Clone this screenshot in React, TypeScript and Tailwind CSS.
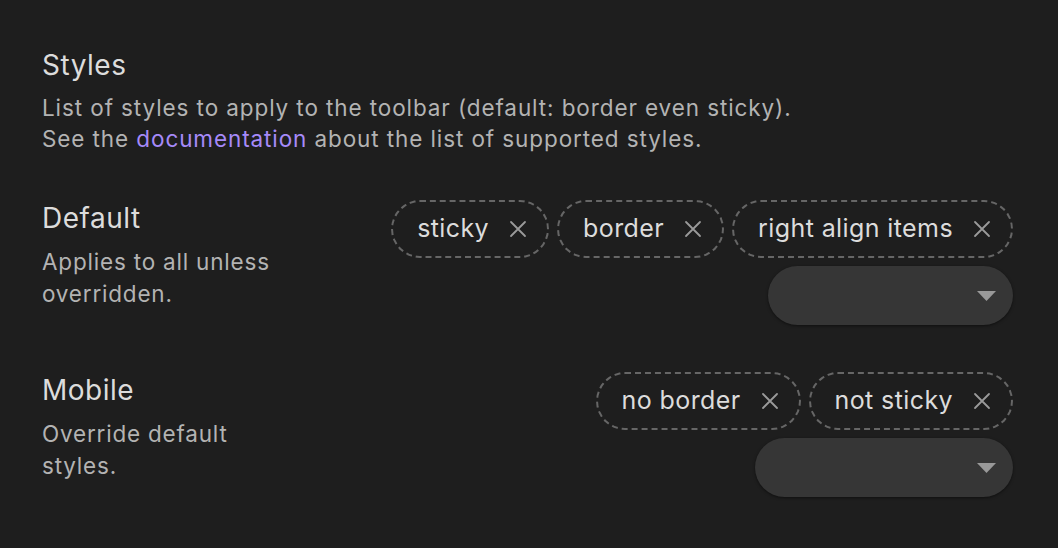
import { ReactNode } from "react";

function Chip({ label }: { label: string }) {
  return (
    <div className="flex h-[58px] items-center rounded-full border-2 border-dashed border-[#666666] pl-[24px] pr-[20px]">
      <span className="text-[25px] tracking-[0.4px] text-[#dcdcdc]">{label}</span>
      <svg className="ml-[20px]" width="18" height="18" viewBox="0 0 18 18" fill="none">
        <path d="M2 2L16 16M16 2L2 16" stroke="#9a9a9a" strokeWidth="1.8" strokeLinecap="round" />
      </svg>
    </div>
  );
}

function Dropdown({ width }: { width: string }) {
  return (
    <div
      className={`flex h-[59px] items-center justify-end rounded-full bg-[#363636] pr-[17px] shadow-[0_1px_3px_rgba(0,0,0,0.5)] ${width}`}
    >
      <svg width="19" height="10" viewBox="0 0 19 10">
        <path d="M0 0H19L9.5 10Z" fill="#999999" />
      </svg>
    </div>
  );
}

function SettingRow({
  name,
  desc,
  chips,
  dropdown,
}: {
  name: string;
  desc: ReactNode;
  chips: string[];
  dropdown: string;
}) {
  return (
    <div className="flex items-start justify-between">
      <div className="w-[250px]">
        <div className="text-[28px] leading-[36px] tracking-[0.5px] text-[#dcdcdc]">{name}</div>
        <div className="mt-[10px] text-[22.5px] leading-[32px] tracking-[0.8px] text-[#b3b3b3]">{desc}</div>
      </div>
      <div className="flex flex-col items-end gap-[8px]">
        <div className="flex justify-end gap-[8px]">
          {chips.map((c) => (
            <Chip key={c} label={c} />
          ))}
        </div>
        <Dropdown width={dropdown} />
      </div>
    </div>
  );
}

export default function App() {
  return (
    <div
      className="min-h-screen bg-[#1e1e1e] pl-[42px] pr-[45px] pt-[47px]"
      style={{ fontFamily: "Inter, 'Noto Sans', sans-serif" }}
    >
      <div className="text-[28px] leading-[36px] tracking-[0.5px] text-[#dcdcdc]">Styles</div>
      <div className="mt-[9px] text-[22.5px] leading-[31px] tracking-[0.9px] text-[#b3b3b3]">
        <p>List of styles to apply to the toolbar (default: border even sticky).</p>
        <p>
          See the <span className="text-[#a68af9]">documentation</span> about the list of supported styles.
        </p>
      </div>
      <div className="mt-[46px] flex flex-col gap-[47px]">
        <SettingRow
          name="Default"
          desc="Applies to all unless overridden."
          chips={["sticky", "border", "right align items"]}
          dropdown="w-[245px]"
        />
        <SettingRow
          name="Mobile"
          desc="Override default styles."
          chips={["no border", "not sticky"]}
          dropdown="w-[258px]"
        />
      </div>
    </div>
  );
}
